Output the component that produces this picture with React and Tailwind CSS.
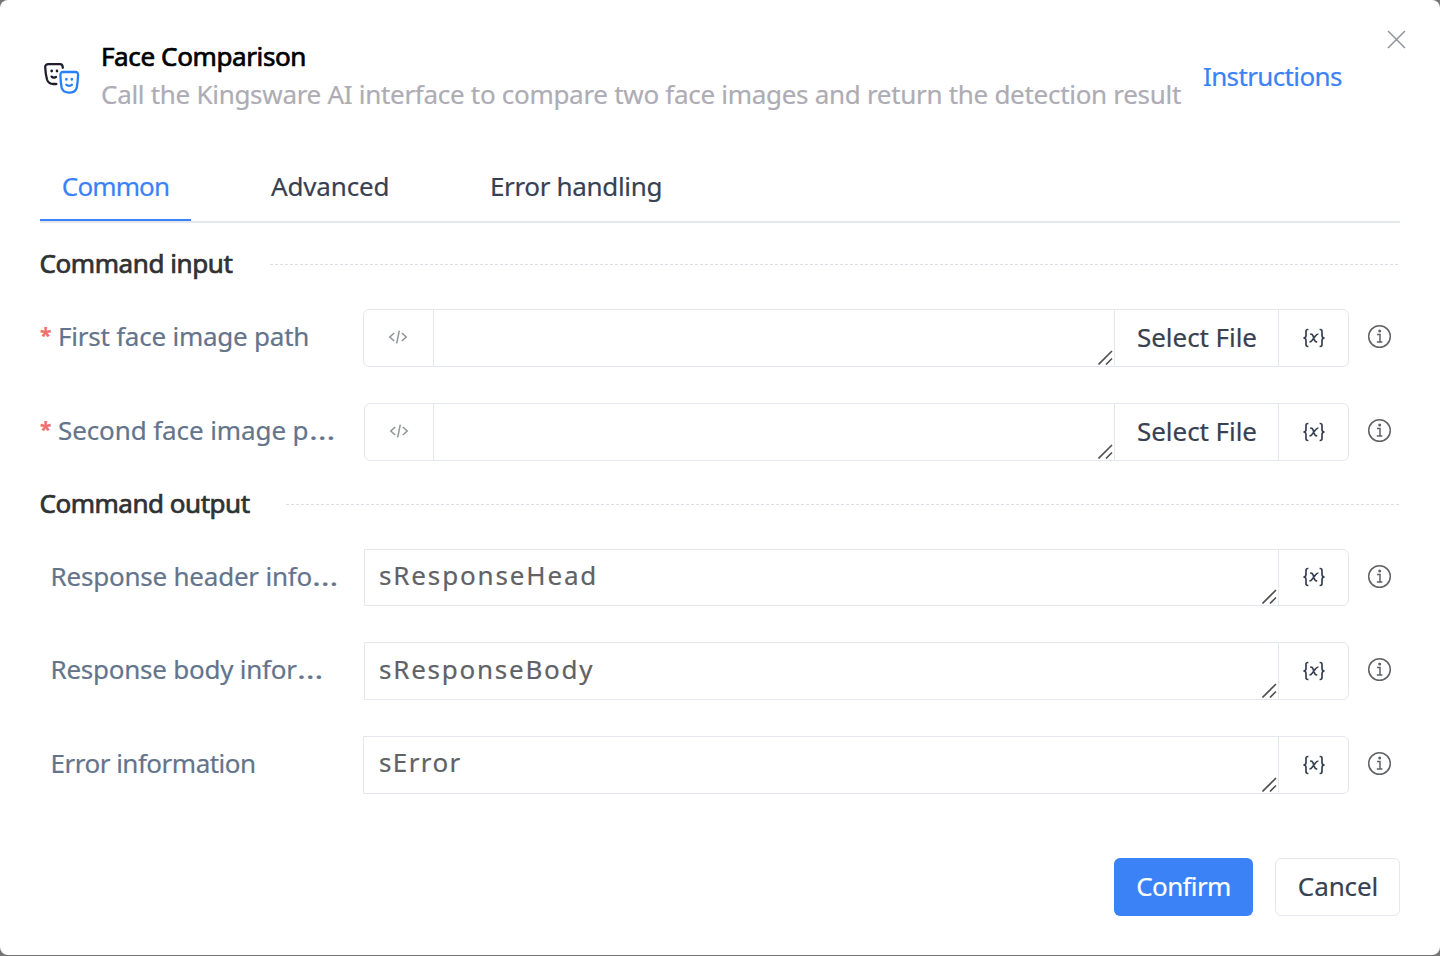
const faux = '[-webkit-text-stroke:0.7px_currentColor]';

function Masks() {
  return (
    <svg width="38" height="34" viewBox="43 61 38 34" fill="none" strokeWidth="2.3" strokeLinecap="round" strokeLinejoin="round">
      <g stroke="#1f1d2e">
        <path d="M62.8 67.8C62.8 65.4 61.8 64.2 60 64.2H48.5C46.2 64.2 45.1 65.4 45.2 67.5C45.4 71 45.9 75.5 47 79.5C48 82.5 50.5 84 53.5 84H56.3" />
        <path d="M51.6 76.6C52.8 77.8 55 77.8 56 77" />
        <path d="M51.7 70.9V71.1M57 70.9V71.1" strokeWidth="2.7" />
      </g>
      <g stroke="#2680fa">
        <path d="M63 72H75.5C77.4 72 78.2 73.3 78.1 75C77.9 79 77.6 83 76.8 87.5C76.1 91 73.5 92.6 69.2 92.6C64.8 92.6 62.4 91 61.6 87.5C60.8 83 60.5 79 60.4 75C60.3 73.3 61.2 72 63 72Z" />
        <path d="M66.3 84.8C67.6 86.2 70.6 86.2 71.9 84.8" />
        <path d="M66.4 79V79.4M71.8 79V79.4" strokeWidth="2.5" />
      </g>
    </svg>
  );
}

function CloseIcon() {
  return (
    <svg width="19" height="19" viewBox="0 0 19 19" fill="none" stroke="#909399" strokeWidth="1.5">
      <path d="M1 1L18 18M18 1L1 18" />
    </svg>
  );
}

function CodeIcon() {
  return (
    <svg className="-mt-[2px] mr-px" width="20" height="16" viewBox="0 0 20 16" fill="none" stroke="#909399" strokeWidth="1.5">
      <path d="M6.2 4L1.8 8L6.2 12M13.8 4L18.2 8L13.8 12M11.3 1.7L8.7 14.3" />
    </svg>
  );
}

function VarIcon() {
  return (
    <svg className="-mt-[1px]" width="24" height="20" viewBox="0 0 24 20" fill="none" stroke="#374151" strokeWidth="1.7">
      <path d="M6.4 1.5H5.8C4.6 1.5 4 2.2 4 3.4V7.4C4 9 3.2 10 1.4 10C3.2 10 4 11 4 12.6V16.6C4 17.8 4.6 18.5 5.8 18.5H6.4" />
      <path d="M17.6 1.5H18.2C19.4 1.5 20 2.2 20 3.4V7.4C20 9 20.8 10 22.6 10C20.8 10 20 11 20 12.6V16.6C20 17.8 19.4 18.5 18.2 18.5H17.6" />
      <path d="M8.2 6.2H9C10.2 6.2 10.6 6.7 11 7.8L12.6 12.2C13 13.4 13.4 13.9 14.6 13.9H15.2M16.4 6C15 6 14.2 6.8 13.2 8.2L10.6 11.8C9.6 13.2 8.8 14 7.4 14" />
    </svg>
  );
}

function InfoIcon() {
  return (
    <svg className="shrink-0" width="25" height="25" viewBox="0 0 25 25" fill="none" stroke="#606266" strokeWidth="1.5">
      <circle cx="12.5" cy="12.5" r="10.8" />
      <path d="M10 10.4H13V18M9.8 18H15.4" />
      <circle cx="12.7" cy="7" r="1.5" fill="#606266" stroke="none" />
    </svg>
  );
}

function Grip() {
  return (
    <svg className="absolute right-[1px] bottom-[1px]" width="15" height="15" viewBox="0 0 15 15" fill="none" stroke="#505050" strokeWidth="1.6">
      <path d="M0.5 14.5L14 1M8 14.5L14 8.5" />
    </svg>
  );
}

function Section({ children, className }) {
  return (
    <div className="flex h-[38px] items-center">
      <h2 className={`text-[#303133] font-normal whitespace-nowrap shrink-0 -mt-[2px] -ml-[0.5px] ${faux} ${className}`}>{children}</h2>
      <div className="h-px flex-1 bg-[repeating-linear-gradient(90deg,#dcdfe6_0_3px,transparent_3px_5px)]" />
    </div>
  );
}

function Label({ children, className, cut, required }) {
  return (
    <div className={`flex w-[323px] shrink-0 items-center text-[#64748b] whitespace-nowrap -mt-[4px] ${required ? '' : 'pl-[10.5px]'}`}>
      {required && <span className="w-[18px] -mt-[2px] text-[#f56c6c] text-[21px] font-bold">*</span>}
      <span className={className}>{children}{cut && <span className="ml-[0.5px] inline-block origin-left scale-x-[1.28]">…</span>}</span>
    </div>
  );
}

function FileRow({ label, track, cut, shift, lead }) {
  return (
    <div className="flex h-[58px] items-center">
      <Label required className={track} cut={cut}>{label}</Label>
      <div className={`flex h-[58px] flex-1 rounded-[6px] border border-[#e4e7ed] ${shift}`}>
        <div className={`flex items-center justify-center border-r border-[#e4e7ed] ${lead}`}><CodeIcon /></div>
        <div className="relative flex-1"><Grip /></div>
        <div className="w-[165px] border-x border-[#e4e7ed] pl-px text-center leading-[55px] text-[#374151] tracking-[-0.05px]">Select File</div>
        <div className="flex w-[69px] items-center justify-center"><VarIcon /></div>
      </div>
      <div className="flex w-[51px] pl-[18px] -mt-[3px]"><InfoIcon /></div>
    </div>
  );
}

function OutputRow({ label, track, cut, value, valueTrack, shift, size = 'h-[58px]' }) {
  return (
    <div className={`flex items-center ${size}`}>
      <Label className={track} cut={cut}>{label}</Label>
      <div className={`flex flex-1 rounded-r-[6px] border border-[#e4e7ed] ${size} ${shift}`}>
        <div className={`relative flex-1 text-[#606266] ${valueTrack}`}>{value}<Grip /></div>
        <div className="flex w-[70px] items-center justify-center border-l border-[#e4e7ed]"><VarIcon /></div>
      </div>
      <div className="flex w-[51px] pl-[18px] -mt-[3px]"><InfoIcon /></div>
    </div>
  );
}

export default function App() {
  return (
    <div className="h-[956px] w-[1440px] overflow-hidden bg-[#757575] font-['Noto_Sans',sans-serif] text-[26px] leading-[38px] [-webkit-text-stroke:0.2px_currentColor]">
      <div className="flex h-[955px] flex-col rounded-[8px] bg-white px-[40px]">
        <header className="flex h-[150px] pt-[37px]">
          <div className="w-[61px] shrink-0 pt-[24px] pl-[3px]"><Masks /></div>
          <div className="w-[1105px] shrink-0 whitespace-nowrap">
            <h1 className={`font-normal text-black tracking-[-0.38px] ${faux}`}>Face Comparison</h1>
            <p className="text-[#aeacb4] tracking-[-0.295px]">Call the Kingsware AI interface to compare two face images and return the detection result</p>
          </div>
          <a className="-ml-[4px] mt-[20px] w-[185px] shrink-0 text-[#3b82f6] tracking-[-0.63px] pl-px">Instructions</a>
          <button className="-mt-[7px] h-[19px] shrink-0"><CloseIcon /></button>
        </header>

        <nav className="flex h-[73px] border-b-2 border-[#e4e7ed] whitespace-nowrap text-[#374151]">
          <div className="-mb-[1px] flex h-[71px] w-[151px] items-center justify-center border-b-2 border-[#3b82f6] pt-[2px] text-[#3b82f6] tracking-[-0.88px]">Common</div>
          <div className="ml-[80px] flex h-[71px] items-center tracking-[-0.15px]">Advanced</div>
          <div className="ml-[100.5px] flex h-[71px] items-center tracking-[-0.33px]">Error handling</div>
        </nav>

        <main className="flex flex-col pt-[22px]">
          <Section className="w-[230.5px] tracking-[-0.42px]">Command input</Section>
          <div className="mt-[26px] flex flex-col gap-[36px]">
            <FileRow label="First face image path" track="tracking-[-0.23px]" shift="" lead="w-[70px]" />
            <FileRow label="Second face image p" cut track="tracking-[-0.1px]" shift="ml-px" lead="w-[69px]" />
          </div>
          <div className="mt-[24px]"><Section className="w-[246.5px] tracking-[-0.48px]">Command output</Section></div>
          <div className="mt-[26px] flex flex-col gap-[36px]">
            <OutputRow size="h-[57px]" label="Response header info" cut track="tracking-[-0.22px]" value="sResponseHead" valueTrack="pl-[14px] leading-[51px] tracking-[1.85px]" shift="ml-px" />
            <OutputRow label="Response body infor" cut track="tracking-[-0.25px]" value="sResponseBody" valueTrack="pl-[14px] leading-[52px] tracking-[1.75px]" shift="ml-px" />
            <OutputRow label="Error information" track="tracking-[-0.5px]" value="sError" valueTrack="pl-[15px] leading-[51px] tracking-[1.4px]" shift="" />
          </div>
        </main>

        <footer className="mt-[64px] flex justify-end gap-[22px]">
          <button className="h-[58px] w-[139px] rounded-[6px] bg-[#3b82f6] pb-[2px] text-white tracking-[-0.65px]">Confirm</button>
          <button className="h-[58px] w-[125px] rounded-[6px] border border-[#e4e7ed] pb-[2px] pl-[1px] tracking-[-0.1px] text-[#374151]">Cancel</button>
        </footer>
      </div>
    </div>
  );
}
